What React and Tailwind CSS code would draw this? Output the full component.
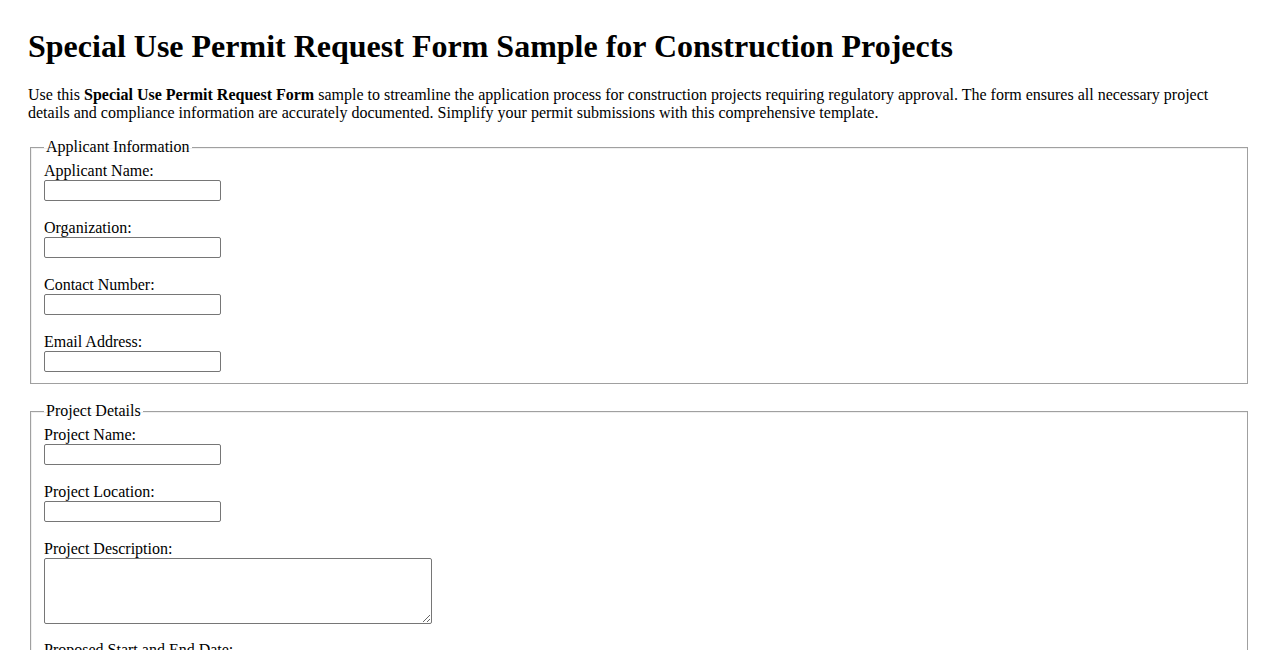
export default function App() {
  const inputCls =
    "block w-[177px] h-[21px] border border-solid border-[#767676] rounded-[2px] bg-white px-[2px] text-[13px] font-['Liberation_Sans',sans-serif]";
  const Field = ({ label, last }) => (
    <div className={last ? "" : "mb-[18px]"}>
      <label className="block h-[18px] leading-[18px]">{label}</label>
      <input type="text" className={inputCls} />
    </div>
  );
  const fsCls =
    "mx-[2px] border border-solid border-[#a0a0a0] shadow-[inset_1px_1px_0_#f0f0f0] px-[13px] pb-[11px] pt-[6px]";
  return (
    <div className="min-h-screen bg-white text-black font-['Liberation_Serif',serif] text-[16px] px-[28px] pt-[28px]">
      <h1 className="text-[32px] font-bold leading-[37px] mb-[21px]">
        Special Use Permit Request Form Sample for Construction Projects
      </h1>
      <p className="leading-[18px] mb-[16px]">
        Use this <strong className="font-bold">Special Use Permit Request Form</strong> sample to streamline the
        application process for construction projects requiring regulatory approval. The form ensures all necessary
        project details and compliance information are accurately documented. Simplify your permit submissions with
        this comprehensive template.
      </p>
      <form>
        <fieldset className={fsCls}>
          <legend className="px-[2px] leading-[18px]">Applicant Information</legend>
          <Field label="Applicant Name:" />
          <Field label="Organization:" />
          <Field label="Contact Number:" />
          <Field label="Email Address:" last />
        </fieldset>
        <fieldset className={fsCls + " mt-[18px]"}>
          <legend className="px-[2px] leading-[18px]">Project Details</legend>
          <Field label="Project Name:" />
          <Field label="Project Location:" />
          <div className="mb-[17px]">
            <label className="block h-[18px] leading-[18px]">Project Description:</label>
            <textarea className="block w-[388px] h-[66px] border border-solid border-[#767676] rounded-[2px] bg-white px-[2px] text-[13px] font-['Liberation_Mono',monospace]" />
          </div>
          <div className="mb-[18px]">
            <label className="block h-[18px] leading-[18px]">Proposed Start and End Date:</label>
            <input type="date" className={inputCls} />
          </div>
          <Field label="Estimated Duration:" last />
        </fieldset>
      </form>
    </div>
  );
}
